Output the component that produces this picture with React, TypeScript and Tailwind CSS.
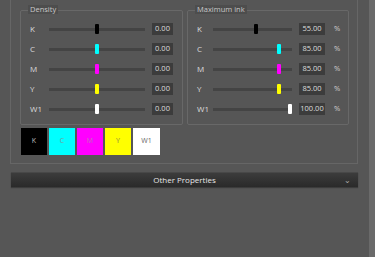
import React from "react";

type Row = { label: string; color: string; pct: number; value: string };

const density: Row[] = [
  { label: "K", color: "#000000", pct: 50, value: "0.00" },
  { label: "C", color: "#00ffff", pct: 50, value: "0.00" },
  { label: "M", color: "#ff00ff", pct: 50, value: "0.00" },
  { label: "Y", color: "#ffff00", pct: 50, value: "0.00" },
  { label: "W1", color: "#ffffff", pct: 50, value: "0.00" },
];

const maxInk: Row[] = [
  { label: "K", color: "#000000", pct: 55, value: "55.00" },
  { label: "C", color: "#00ffff", pct: 85, value: "85.00" },
  { label: "M", color: "#ff00ff", pct: 85, value: "85.00" },
  { label: "Y", color: "#ffff00", pct: 85, value: "85.00" },
  { label: "W1", color: "#ffffff", pct: 100, value: "100.00" },
];

function Slider({ pct, color, width }: { pct: number; color: string; width: number }) {
  const left = Math.round(((width - 4) * pct) / 100);
  return (
    <div className="relative h-[20px] shrink-0" style={{ width }}>
      <div className="absolute left-0 right-0 top-[9px] h-[3px] bg-[#444444]" />
      <div
        className="absolute top-[5px] h-[10px] w-[4px] rounded-[1px]"
        style={{ left, backgroundColor: color }}
      />
    </div>
  );
}

function GroupBox({
  title,
  children,
  className,
}: {
  title: string;
  children: React.ReactNode;
  className: string;
}) {
  return (
    <div className={"relative border border-[#686868] rounded-[2px] pt-[8px] pb-[5px] " + className}>
      <div className="absolute left-[7px] top-[-6px] h-[9px] px-[2px] bg-[#4d4d4d] flex items-center whitespace-nowrap text-[7.5px] leading-none text-[#c8c8c8]">
        {title}
      </div>
      {children}
    </div>
  );
}

export default function App() {
  return (
    <div
      className="w-[375px] h-[257px] bg-[#565656] flex overflow-hidden"
      style={{ fontFamily: '"Open Sans", "Noto Sans", sans-serif' }}
    >
      <div className="w-[358px] shrink-0 pl-[10px] flex flex-col">
        <div className="h-[164px] border-l border-r border-b border-[#666666] pl-[9px] pt-[10px] flex flex-col">
          <div className="flex gap-[4px]">
            <GroupBox title="Density" className="w-[163px]">
              {density.map((r) => (
                <div key={r.label} className="flex items-center h-[20px] pl-[9px]">
                  <div className="w-[19px] text-[8px] leading-none text-[#dcdcdc]">{r.label}</div>
                  <Slider pct={r.pct} color={r.color} width={96} />
                  <div className="ml-[7px] w-[21px] h-[12px] bg-[#3c3c3c] flex items-center justify-center text-[7.5px] leading-none text-[#dddddd]">
                    {r.value}
                  </div>
                </div>
              ))}
            </GroupBox>
            <GroupBox title="Maximum ink" className="w-[162px]">
              {maxInk.map((r) => (
                <div key={r.label} className="flex items-center h-[20px] pl-[9px]">
                  <div className="w-[16px] text-[8px] leading-none text-[#dcdcdc]">{r.label}</div>
                  <Slider pct={r.pct} color={r.color} width={79} />
                  <div className="ml-[7px] w-[26px] h-[12px] bg-[#3c3c3c] flex items-center justify-center text-[7.5px] leading-none text-[#dddddd]">
                    {r.value}
                  </div>
                  <div className="ml-[9px] text-[7.5px] leading-none text-[#cfcfcf]">%</div>
                </div>
              ))}
            </GroupBox>
          </div>
          <div className="flex gap-[2px] mt-[3px] ml-[1px]">
            <div className="w-[26px] h-[27px] bg-black flex items-center justify-center text-[7px] text-[#bbbbbb]">K</div>
            <div className="w-[26px] h-[27px] bg-[#00ffff] flex items-center justify-center text-[7px] text-[#7a9a9a]">C</div>
            <div className="w-[26px] h-[27px] bg-[#ff00ff] flex items-center justify-center text-[7px] text-[#c070c0]">M</div>
            <div className="w-[26px] h-[27px] bg-[#ffff00] flex items-center justify-center text-[7px] text-[#8a8a40]">Y</div>
            <div className="w-[27px] h-[27px] bg-white flex items-center justify-center text-[7px] text-[#666666]">W1</div>
          </div>
        </div>
        <div className="mt-[8px] ml-[1px] h-[15px] bg-gradient-to-b from-[#3c3c3c] to-[#2a2a2a] border-t border-[#484848] flex items-center relative shadow-[0_1px_1px_rgba(0,0,0,0.3)]">
          <div className="flex-1 text-center text-[8px] leading-none text-[#e6e6e6]">Other Properties</div>
          <div className="absolute right-[7px] top-[3px] text-[8px] leading-none text-[#aaaaaa]">⌄</div>
        </div>
      </div>
      <div className="flex-1" />
      <div className="w-[6px] bg-[#6a6a6a]" />
    </div>
  );
}
